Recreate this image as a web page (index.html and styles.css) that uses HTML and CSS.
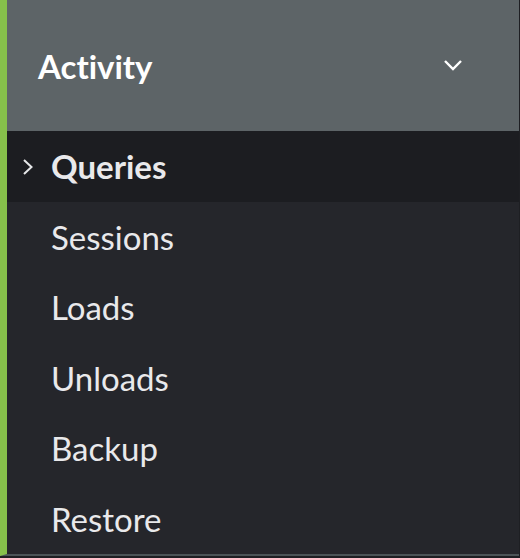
FILE: index.html
```html
<!DOCTYPE html>
<html lang="en">
<head>
  <meta charset="UTF-8" />
  <title>Activity menu</title>
  <link rel="stylesheet" href="styles.css">
</head>
<body>
  <div class="panel">
    <div class="group-head">
      <span class="group-title">Activity</span>
      <svg class="chev-down" width="20" height="13" viewBox="0 0 20 13">
        <path d="M2 2 L10 10 L18 2" fill="none" stroke="#fff" stroke-width="2.4" />
      </svg>
    </div>
    <ul class="menu">
      <li class="menu-item active">
        <svg class="chev-right" width="12" height="18" viewBox="0 0 12 18">
          <path d="M2 2 L9.5 9 L2 16" fill="none" stroke="#e6e7e9" stroke-width="2" />
        </svg>
        Queries
      </li>
      <li class="menu-item">Sessions</li>
      <li class="menu-item">Loads</li>
      <li class="menu-item">Unloads</li>
      <li class="menu-item">Backup</li>
      <li class="menu-item">Restore</li>
    </ul>
  </div>
</body>
</html>
```

FILE: styles.css
```css
body {
  margin: 0;
  padding: 0;
  background-color: #1e1f23;
  font-family: Lato, "Open Sans", sans-serif;
  font-variant-ligatures: none;
  height: 558px;
  overflow: hidden;
}

.panel {
  width: 512px;
  height: 554px;
  border-left: 7px solid #86c04b;
  border-bottom: 2px solid #4c5457;
  background-color: #25262b;
}

.group-head {
  height: 131px;
  background-color: #5d6467;
  display: flex;
  align-items: center;
  justify-content: space-between;
  padding: 0 56px 0 31px;
}

.group-title {
  color: #fff;
  font-size: 33px;
  font-weight: bold;
}

.menu {
  list-style: none;
  margin: 0;
  padding: 0;
}

.menu-item {
  position: relative;
  height: 70.5px;
  display: flex;
  align-items: center;
  padding-left: 44px;
  font-size: 33px;
  color: #e9e9eb;
}

.menu-item.active {
  background-color: #1c1d21;
  font-weight: bold;
}

.chev-right {
  position: absolute;
  left: 15px;
  top: 27px;
}
```
